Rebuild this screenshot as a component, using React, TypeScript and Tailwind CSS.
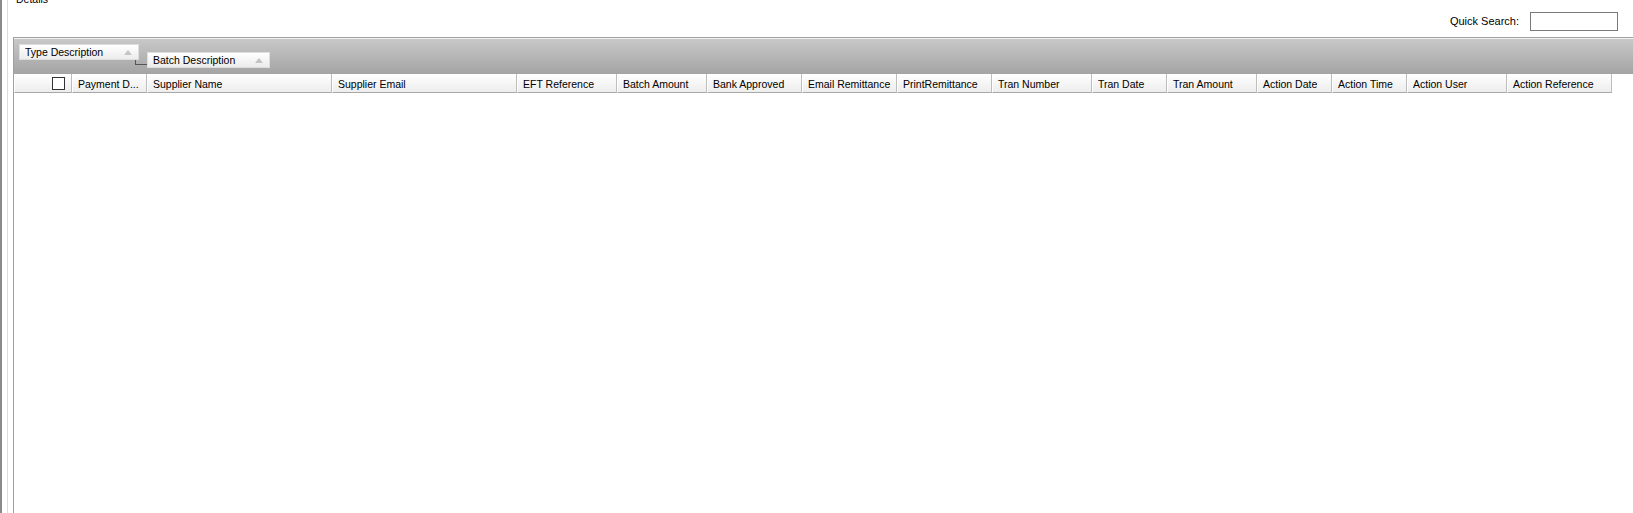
import React from 'react';

const columns = [
  { label: 'Payment D...', width: 'w-[75px]' },
  { label: 'Supplier Name', width: 'w-[185px]' },
  { label: 'Supplier Email', width: 'w-[185px]' },
  { label: 'EFT Reference', width: 'w-[100px]' },
  { label: 'Batch Amount', width: 'w-[90px]' },
  { label: 'Bank Approved', width: 'w-[95px]' },
  { label: 'Email Remittance', width: 'w-[95px]' },
  { label: 'PrintRemittance', width: 'w-[95px]' },
  { label: 'Tran Number', width: 'w-[100px]' },
  { label: 'Tran Date', width: 'w-[75px]' },
  { label: 'Tran Amount', width: 'w-[90px]' },
  { label: 'Action Date', width: 'w-[75px]' },
  { label: 'Action Time', width: 'w-[75px]' },
  { label: 'Action User', width: 'w-[100px]' },
  { label: 'Action Reference', width: 'w-[105px]' },
];

const SortArrow = () => (
  <svg width="8" height="5" viewBox="0 0 8 5" className="shrink-0">
    <path d="M0 5 L4 0 L8 5 Z" fill="#c4c4c4" />
  </svg>
);

const GroupChip: React.FC<{ label: string; width: string }> = ({ label, width }) => (
  <div
    className={`${width} h-[16px] flex items-center justify-between pl-[5px] pr-[6px] pt-[1px] bg-gradient-to-b from-white to-[#ececec] border border-[#dedede] text-black whitespace-nowrap`}
  >
    <span>{label}</span>
    <SortArrow />
  </div>
);

export default function App() {
  return (
    <div
      className="w-[1633px] h-[513px] bg-white flex overflow-hidden text-[10.5px] leading-[13px] text-black"
      style={{ fontFamily: '"Liberation Sans", Arial, sans-serif' }}
    >
      {/* outer panel edges */}
      <div className="w-[2px] bg-[#8a8a8a] shrink-0" />
      <div className="w-[5px] shrink-0" />
      <div className="w-[1px] bg-[#dcdcdc] shrink-0" />
      <div className="w-[5px] shrink-0" />

      <div className="flex-1 flex flex-col min-w-0">
        {/* top strip */}
        <div className="h-[37px] flex items-start justify-between shrink-0">
          <div className="ml-[3px] mt-[-7px]">Details</div>
          <div className="flex items-center gap-[11px] mt-[12px] mr-[15px]">
            <span className="text-[11px]">Quick Search:</span>
            <div className="w-[88px] h-[19px] border border-[#7a7a7a] bg-white" />
          </div>
        </div>

        {/* grid */}
        <div className="flex-1 flex flex-col border-t border-l border-[#a0a0a0] min-h-0">
          {/* group by panel */}
          <div className="h-[36px] shrink-0 flex items-start border-t border-[#f2f2f2] bg-gradient-to-b from-[#c8c8c8] to-[#a4a4a4]">
            <div className="ml-[5px] mt-[5px]">
              <GroupChip label="Type Description" width="w-[120px]" />
            </div>
            <div className="relative ml-[8px] mt-[13px]">
              <div className="absolute left-[-12px] top-[8px] w-[12px] h-[5px] border-l border-b border-[#555555]" />
              <GroupChip label="Batch Description" width="w-[123px]" />
            </div>
          </div>

          {/* column headers */}
          <div className="flex shrink-0 bg-white">
            <div className="w-[58px] h-[19px] flex items-center justify-end pr-[6px] border-l border-white border-r border-r-[#bdbdbd] border-b border-b-[#a8a8a8] bg-gradient-to-b from-white to-[#ededed]">
              <div className="w-[13px] h-[13px] border border-[#333333] bg-white" />
            </div>
            {columns.map((c) => (
              <div
                key={c.label}
                className={`${c.width} h-[19px] flex items-center pl-[5px] pt-[2px] border-l border-white border-r border-r-[#bdbdbd] border-b border-b-[#a8a8a8] bg-gradient-to-b from-white to-[#ededed] whitespace-nowrap overflow-hidden`}
              >
                {c.label}
              </div>
            ))}
          </div>

          {/* empty body */}
          <div className="flex-1 bg-white" />
        </div>
      </div>
    </div>
  );
}
